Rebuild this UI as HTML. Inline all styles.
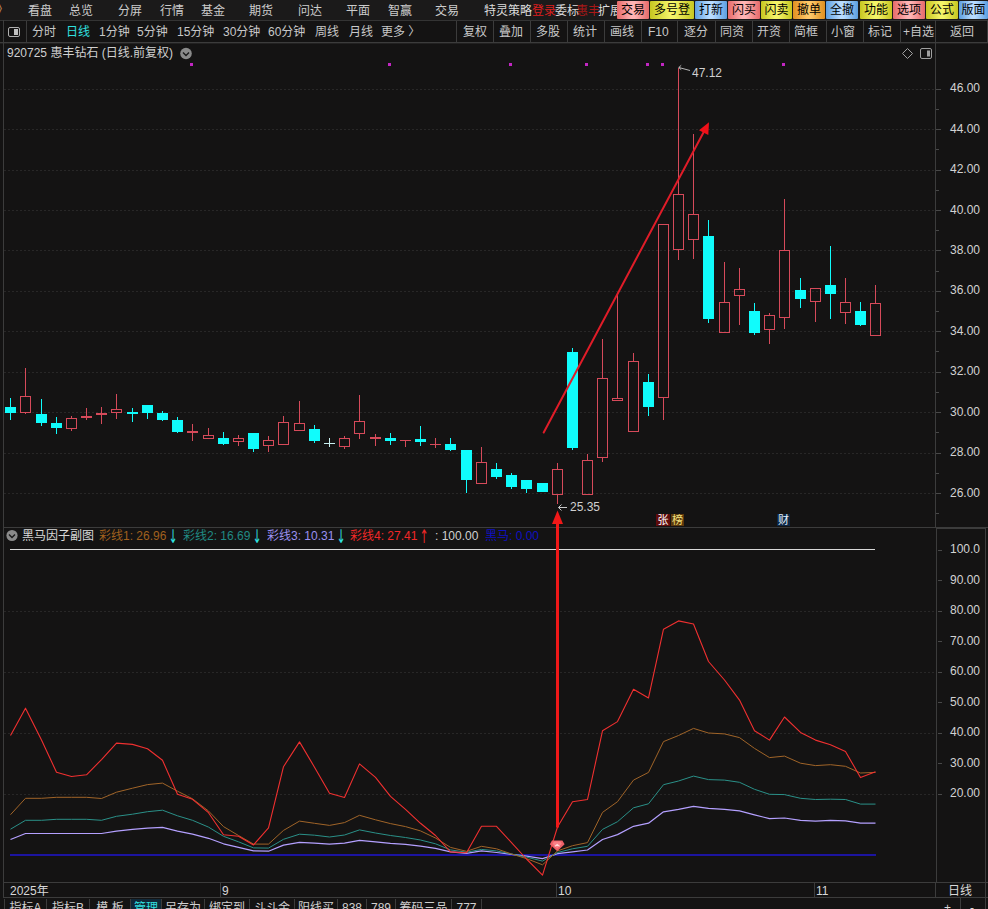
<!DOCTYPE html><html><head><meta charset="utf-8"><title>chart</title><style>
html,body{margin:0;padding:0;background:#141313;}
body{width:988px;height:909px;position:relative;overflow:hidden;font-family:"Liberation Sans","Noto Sans CJK SC",sans-serif;font-size:12px;color:#c8c8c8;}
.t{position:absolute;white-space:nowrap;line-height:14px;height:14px;}
.m{color:#cccccc;top:4px}
.tb{color:#c8c8c8;top:25px}
.btn{position:absolute;top:1px;height:18px;line-height:18px;text-align:center;color:#000;font-size:12px;border-radius:1px}
.bR{background:linear-gradient(90deg,#e66a6a 0,#ffb4b4 45%,#ffb4b4 55%,#e66a6a 100%)}
.bY{background:linear-gradient(90deg,#c6c620 0,#f4f468 45%,#f4f468 55%,#c6c620 100%)}
.bB{background:linear-gradient(90deg,#5c9ee0 0,#b8dcff 45%,#b8dcff 55%,#5c9ee0 100%)}
.bO{background:linear-gradient(90deg,#e09020 0,#ffc868 45%,#ffc868 55%,#e09020 100%)}
.ax{position:absolute;left:950px;width:32px;text-align:left;color:#d2d2d2;font-size:12px;line-height:14px;height:14px}
.tab{position:absolute;top:899px;height:12px;border-left:1px solid #3c3c3c;color:#d0d0d0;line-height:19px;text-align:center;font-size:12px;overflow:hidden}
.ar{position:absolute;top:527px;width:12px;height:20px;line-height:20px;text-align:center;font-family:'DejaVu Sans',sans-serif;font-size:13px;transform:scale(0.8,1.45);}
.tag{position:absolute;top:514px;height:12px;width:13px;line-height:12px;font-size:11px;text-align:center}

</style></head><body>
<svg width="988" height="909" viewBox="0 0 988 909" style="position:absolute;left:0;top:0">
<g stroke="#282727" stroke-width="1" stroke-dasharray="2 2" shape-rendering="crispEdges">
<line x1="4" y1="89.5" x2="935" y2="89.5"/>
<line x1="4" y1="129.5" x2="935" y2="129.5"/>
<line x1="4" y1="170.5" x2="935" y2="170.5"/>
<line x1="4" y1="210.5" x2="935" y2="210.5"/>
<line x1="4" y1="250.5" x2="935" y2="250.5"/>
<line x1="4" y1="291.5" x2="935" y2="291.5"/>
<line x1="4" y1="331.5" x2="935" y2="331.5"/>
<line x1="4" y1="372.5" x2="935" y2="372.5"/>
<line x1="4" y1="412.5" x2="935" y2="412.5"/>
<line x1="4" y1="453.5" x2="935" y2="453.5"/>
<line x1="4" y1="493.5" x2="935" y2="493.5"/>
<line x1="4" y1="611.5" x2="935" y2="611.5"/>
<line x1="4" y1="672.5" x2="935" y2="672.5"/>
<line x1="4" y1="733.5" x2="935" y2="733.5"/>
<line x1="4" y1="794.5" x2="935" y2="794.5"/>
</g>
<g stroke="#3c3c3c" stroke-width="1" shape-rendering="crispEdges" fill="none">
<line x1="0" y1="20.5" x2="988" y2="20.5" stroke="#343434"/>
<line x1="0" y1="42.5" x2="988" y2="42.5"/>
<line x1="0" y1="43.5" x2="988" y2="43.5" stroke="#222121"/>
<line x1="987.5" y1="20" x2="987.5" y2="43"/>
<line x1="3.5" y1="20" x2="3.5" y2="898"/>
<line x1="935.5" y1="20" x2="935.5" y2="528"/><line x1="935.5" y1="882" x2="935.5" y2="898"/>
<line x1="3" y1="527.5" x2="988" y2="527.5"/>
<line x1="3" y1="882.5" x2="988" y2="882.5"/>
<line x1="3" y1="897.5" x2="988" y2="897.5"/>
<rect x="936.5" y="528.5" width="49" height="354"/>
<line x1="985.5" y1="882" x2="985.5" y2="909"/>
<line x1="960.5" y1="898" x2="960.5" y2="909"/>
<line x1="220.5" y1="883" x2="220.5" y2="897"/>
<line x1="556.5" y1="883" x2="556.5" y2="897"/>
<line x1="814.5" y1="883" x2="814.5" y2="897"/>
<line x1="26.5" y1="21" x2="26.5" y2="42"/>
<line x1="456.5" y1="21" x2="456.5" y2="42"/>
<line x1="493.5" y1="21" x2="493.5" y2="42"/>
<line x1="530.5" y1="21" x2="530.5" y2="42"/>
<line x1="567.5" y1="21" x2="567.5" y2="42"/>
<line x1="604.5" y1="21" x2="604.5" y2="42"/>
<line x1="641.5" y1="21" x2="641.5" y2="42"/>
<line x1="677.5" y1="21" x2="677.5" y2="42"/>
<line x1="715.5" y1="21" x2="715.5" y2="42"/>
<line x1="752.5" y1="21" x2="752.5" y2="42"/>
<line x1="789.5" y1="21" x2="789.5" y2="42"/>
<line x1="826.5" y1="21" x2="826.5" y2="42"/>
<line x1="863.5" y1="21" x2="863.5" y2="42"/>
<line x1="900.5" y1="21" x2="900.5" y2="42"/>
</g>
<g stroke="#484848" stroke-width="1" shape-rendering="crispEdges">
<line x1="936" y1="89.5" x2="941" y2="89.5"/>
<line x1="936" y1="109.5" x2="939" y2="109.5"/>
<line x1="936" y1="129.5" x2="941" y2="129.5"/>
<line x1="936" y1="149.5" x2="939" y2="149.5"/>
<line x1="936" y1="170.5" x2="941" y2="170.5"/>
<line x1="936" y1="190.5" x2="939" y2="190.5"/>
<line x1="936" y1="210.5" x2="941" y2="210.5"/>
<line x1="936" y1="230.5" x2="939" y2="230.5"/>
<line x1="936" y1="250.5" x2="941" y2="250.5"/>
<line x1="936" y1="271.5" x2="939" y2="271.5"/>
<line x1="936" y1="291.5" x2="941" y2="291.5"/>
<line x1="936" y1="311.5" x2="939" y2="311.5"/>
<line x1="936" y1="331.5" x2="941" y2="331.5"/>
<line x1="936" y1="351.5" x2="939" y2="351.5"/>
<line x1="936" y1="372.5" x2="941" y2="372.5"/>
<line x1="936" y1="392.5" x2="939" y2="392.5"/>
<line x1="936" y1="412.5" x2="941" y2="412.5"/>
<line x1="936" y1="432.5" x2="939" y2="432.5"/>
<line x1="936" y1="453.5" x2="941" y2="453.5"/>
<line x1="936" y1="473.5" x2="939" y2="473.5"/>
<line x1="936" y1="493.5" x2="941" y2="493.5"/>
<line x1="936" y1="513.5" x2="939" y2="513.5"/>
<line x1="938" y1="794.5" x2="942" y2="794.5"/>
<line x1="938" y1="763.5" x2="942" y2="763.5"/>
<line x1="938" y1="733.5" x2="942" y2="733.5"/>
<line x1="938" y1="702.5" x2="942" y2="702.5"/>
<line x1="938" y1="672.5" x2="942" y2="672.5"/>
<line x1="938" y1="641.5" x2="942" y2="641.5"/>
<line x1="938" y1="611.5" x2="942" y2="611.5"/>
<line x1="938" y1="580.5" x2="942" y2="580.5"/>
<line x1="938" y1="550.5" x2="942" y2="550.5"/>
</g>
<g shape-rendering="crispEdges" stroke-width="1">
<line x1="10.5" y1="398" x2="10.5" y2="420" stroke="#10fcfc"/>
<rect x="5.0" y="407" width="11" height="6" fill="#10fcfc" stroke="none"/>
<line x1="25.5" y1="368" x2="25.5" y2="396" stroke="#d64a5a"/>
<line x1="25.5" y1="413" x2="25.5" y2="414" stroke="#d64a5a"/>
<rect x="20.5" y="396.5" width="10" height="16" fill="none" stroke="#d64a5a"/>
<line x1="41.5" y1="399" x2="41.5" y2="426" stroke="#10fcfc"/>
<rect x="36.0" y="414" width="11" height="9" fill="#10fcfc" stroke="none"/>
<line x1="56.5" y1="417" x2="56.5" y2="434" stroke="#10fcfc"/>
<rect x="51.0" y="423" width="11" height="5" fill="#10fcfc" stroke="none"/>
<line x1="71.5" y1="416" x2="71.5" y2="418" stroke="#d64a5a"/>
<line x1="71.5" y1="429" x2="71.5" y2="431" stroke="#d64a5a"/>
<rect x="66.5" y="418.5" width="10" height="10" fill="none" stroke="#d64a5a"/>
<rect x="81.0" y="416" width="11" height="2" fill="#d64a5a" stroke="none"/>
<line x1="86.5" y1="408" x2="86.5" y2="420" stroke="#d64a5a"/>
<rect x="96.0" y="413" width="11" height="2" fill="#d64a5a" stroke="none"/>
<line x1="101.5" y1="407" x2="101.5" y2="424" stroke="#d64a5a"/>
<line x1="116.5" y1="394" x2="116.5" y2="409" stroke="#d64a5a"/>
<line x1="116.5" y1="413" x2="116.5" y2="419" stroke="#d64a5a"/>
<rect x="111.5" y="409.5" width="10" height="3" fill="none" stroke="#d64a5a"/>
<line x1="132.5" y1="408" x2="132.5" y2="422" stroke="#10fcfc"/>
<rect x="127.0" y="412" width="11" height="2" fill="#10fcfc" stroke="none"/>
<line x1="147.5" y1="405" x2="147.5" y2="419" stroke="#10fcfc"/>
<rect x="142.0" y="405" width="11" height="8" fill="#10fcfc" stroke="none"/>
<line x1="162.5" y1="411" x2="162.5" y2="421" stroke="#10fcfc"/>
<rect x="157.0" y="413" width="11" height="7" fill="#10fcfc" stroke="none"/>
<line x1="177.5" y1="417" x2="177.5" y2="433" stroke="#10fcfc"/>
<rect x="172.0" y="420" width="11" height="12" fill="#10fcfc" stroke="none"/>
<rect x="187.0" y="431" width="11" height="2" fill="#d64a5a" stroke="none"/>
<line x1="192.5" y1="424" x2="192.5" y2="441" stroke="#d64a5a"/>
<line x1="208.5" y1="428" x2="208.5" y2="435" stroke="#d64a5a"/>
<rect x="203.5" y="435.5" width="10" height="3" fill="none" stroke="#d64a5a"/>
<line x1="223.5" y1="432" x2="223.5" y2="445" stroke="#10fcfc"/>
<rect x="218.0" y="438" width="11" height="6" fill="#10fcfc" stroke="none"/>
<line x1="238.5" y1="435" x2="238.5" y2="438" stroke="#d64a5a"/>
<line x1="238.5" y1="442" x2="238.5" y2="446" stroke="#d64a5a"/>
<rect x="233.5" y="438.5" width="10" height="3" fill="none" stroke="#d64a5a"/>
<line x1="253.5" y1="433" x2="253.5" y2="452" stroke="#10fcfc"/>
<rect x="248.0" y="433" width="11" height="16" fill="#10fcfc" stroke="none"/>
<line x1="268.5" y1="436" x2="268.5" y2="440" stroke="#d64a5a"/>
<line x1="268.5" y1="446" x2="268.5" y2="452" stroke="#d64a5a"/>
<rect x="263.5" y="440.5" width="10" height="5" fill="none" stroke="#d64a5a"/>
<line x1="283.5" y1="416" x2="283.5" y2="422" stroke="#d64a5a"/>
<rect x="278.5" y="422.5" width="10" height="22" fill="none" stroke="#d64a5a"/>
<line x1="299.5" y1="401" x2="299.5" y2="423" stroke="#d64a5a"/>
<rect x="294.5" y="423.5" width="10" height="7" fill="none" stroke="#d64a5a"/>
<line x1="314.5" y1="425" x2="314.5" y2="443" stroke="#10fcfc"/>
<rect x="309.0" y="429" width="11" height="12" fill="#10fcfc" stroke="none"/>
<line x1="329.5" y1="438" x2="329.5" y2="447" stroke="#c8f0f0"/>
<rect x="324.0" y="443" width="11" height="1" fill="#c8f0f0" stroke="none"/>
<line x1="344.5" y1="436" x2="344.5" y2="438" stroke="#d64a5a"/>
<line x1="344.5" y1="447" x2="344.5" y2="449" stroke="#d64a5a"/>
<rect x="339.5" y="438.5" width="10" height="8" fill="none" stroke="#d64a5a"/>
<line x1="359.5" y1="395" x2="359.5" y2="421" stroke="#d64a5a"/>
<line x1="359.5" y1="434" x2="359.5" y2="439" stroke="#d64a5a"/>
<rect x="354.5" y="421.5" width="10" height="12" fill="none" stroke="#d64a5a"/>
<rect x="370.0" y="437" width="11" height="2" fill="#d64a5a" stroke="none"/>
<line x1="375.5" y1="434" x2="375.5" y2="446" stroke="#d64a5a"/>
<line x1="390.5" y1="433" x2="390.5" y2="445" stroke="#10fcfc"/>
<rect x="385.0" y="438" width="11" height="3" fill="#10fcfc" stroke="none"/>
<rect x="400.0" y="440" width="11" height="1" fill="#d64a5a" stroke="none"/>
<line x1="405.5" y1="440" x2="405.5" y2="447" stroke="#d64a5a"/>
<line x1="420.5" y1="426" x2="420.5" y2="446" stroke="#10fcfc"/>
<rect x="415.0" y="439" width="11" height="3" fill="#10fcfc" stroke="none"/>
<rect x="430.0" y="444" width="11" height="1" fill="#d64a5a" stroke="none"/>
<line x1="435.5" y1="438" x2="435.5" y2="448" stroke="#d64a5a"/>
<line x1="450.5" y1="438" x2="450.5" y2="451" stroke="#10fcfc"/>
<rect x="445.0" y="444" width="11" height="6" fill="#10fcfc" stroke="none"/>
<line x1="466.5" y1="450" x2="466.5" y2="493" stroke="#10fcfc"/>
<rect x="461.0" y="450" width="11" height="30" fill="#10fcfc" stroke="none"/>
<line x1="481.5" y1="447" x2="481.5" y2="462" stroke="#d64a5a"/>
<rect x="476.5" y="462.5" width="10" height="21" fill="none" stroke="#d64a5a"/>
<line x1="496.5" y1="463" x2="496.5" y2="479" stroke="#10fcfc"/>
<rect x="491.0" y="469" width="11" height="8" fill="#10fcfc" stroke="none"/>
<line x1="511.5" y1="473" x2="511.5" y2="489" stroke="#10fcfc"/>
<rect x="506.0" y="475" width="11" height="12" fill="#10fcfc" stroke="none"/>
<line x1="526.5" y1="480" x2="526.5" y2="493" stroke="#10fcfc"/>
<rect x="521.0" y="480" width="11" height="9" fill="#10fcfc" stroke="none"/>
<line x1="542.5" y1="483" x2="542.5" y2="492" stroke="#10fcfc"/>
<rect x="537.0" y="483" width="11" height="9" fill="#10fcfc" stroke="none"/>
<line x1="557.5" y1="463" x2="557.5" y2="469" stroke="#d64a5a"/>
<line x1="557.5" y1="495" x2="557.5" y2="504" stroke="#d64a5a"/>
<rect x="552.5" y="469.5" width="10" height="25" fill="none" stroke="#d64a5a"/>
<line x1="572.5" y1="348" x2="572.5" y2="450" stroke="#10fcfc"/>
<rect x="567.0" y="352" width="11" height="96" fill="#10fcfc" stroke="none"/>
<line x1="587.5" y1="454" x2="587.5" y2="460" stroke="#d64a5a"/>
<rect x="582.5" y="460.5" width="10" height="34" fill="none" stroke="#d64a5a"/>
<line x1="602.5" y1="339" x2="602.5" y2="378" stroke="#d64a5a"/>
<line x1="602.5" y1="458" x2="602.5" y2="462" stroke="#d64a5a"/>
<rect x="597.5" y="378.5" width="10" height="79" fill="none" stroke="#d64a5a"/>
<line x1="617.5" y1="294" x2="617.5" y2="398" stroke="#d64a5a"/>
<rect x="612.5" y="398.5" width="10" height="2" fill="none" stroke="#d64a5a"/>
<line x1="633.5" y1="353" x2="633.5" y2="361" stroke="#d64a5a"/>
<rect x="628.5" y="361.5" width="10" height="70" fill="none" stroke="#d64a5a"/>
<line x1="648.5" y1="374" x2="648.5" y2="416" stroke="#10fcfc"/>
<rect x="643.0" y="382" width="11" height="25" fill="#10fcfc" stroke="none"/>
<line x1="663.5" y1="398" x2="663.5" y2="420" stroke="#d64a5a"/>
<rect x="658.5" y="224.5" width="10" height="173" fill="none" stroke="#d64a5a"/>
<line x1="678.5" y1="68" x2="678.5" y2="194" stroke="#d64a5a"/>
<line x1="678.5" y1="250" x2="678.5" y2="260" stroke="#d64a5a"/>
<rect x="673.5" y="194.5" width="10" height="55" fill="none" stroke="#d64a5a"/>
<line x1="693.5" y1="134" x2="693.5" y2="214" stroke="#d64a5a"/>
<line x1="693.5" y1="240" x2="693.5" y2="259" stroke="#d64a5a"/>
<rect x="688.5" y="214.5" width="10" height="25" fill="none" stroke="#d64a5a"/>
<line x1="708.5" y1="220" x2="708.5" y2="323" stroke="#10fcfc"/>
<rect x="703.0" y="236" width="11" height="83" fill="#10fcfc" stroke="none"/>
<line x1="724.5" y1="262" x2="724.5" y2="302" stroke="#d64a5a"/>
<rect x="719.5" y="302.5" width="10" height="30" fill="none" stroke="#d64a5a"/>
<line x1="739.5" y1="268" x2="739.5" y2="289" stroke="#d64a5a"/>
<line x1="739.5" y1="296" x2="739.5" y2="325" stroke="#d64a5a"/>
<rect x="734.5" y="289.5" width="10" height="6" fill="none" stroke="#d64a5a"/>
<line x1="754.5" y1="303" x2="754.5" y2="335" stroke="#10fcfc"/>
<rect x="749.0" y="311" width="11" height="22" fill="#10fcfc" stroke="none"/>
<line x1="769.5" y1="313" x2="769.5" y2="315" stroke="#d64a5a"/>
<line x1="769.5" y1="330" x2="769.5" y2="344" stroke="#d64a5a"/>
<rect x="764.5" y="315.5" width="10" height="14" fill="none" stroke="#d64a5a"/>
<line x1="784.5" y1="199" x2="784.5" y2="250" stroke="#d64a5a"/>
<line x1="784.5" y1="318" x2="784.5" y2="329" stroke="#d64a5a"/>
<rect x="779.5" y="250.5" width="10" height="67" fill="none" stroke="#d64a5a"/>
<line x1="800.5" y1="278" x2="800.5" y2="308" stroke="#10fcfc"/>
<rect x="795.0" y="290" width="11" height="9" fill="#10fcfc" stroke="none"/>
<line x1="815.5" y1="302" x2="815.5" y2="322" stroke="#d64a5a"/>
<rect x="810.5" y="288.5" width="10" height="13" fill="none" stroke="#d64a5a"/>
<line x1="830.5" y1="246" x2="830.5" y2="319" stroke="#10fcfc"/>
<rect x="825.0" y="285" width="11" height="9" fill="#10fcfc" stroke="none"/>
<line x1="845.5" y1="278" x2="845.5" y2="302" stroke="#d64a5a"/>
<line x1="845.5" y1="313" x2="845.5" y2="324" stroke="#d64a5a"/>
<rect x="840.5" y="302.5" width="10" height="10" fill="none" stroke="#d64a5a"/>
<line x1="860.5" y1="302" x2="860.5" y2="326" stroke="#10fcfc"/>
<rect x="855.0" y="311" width="11" height="14" fill="#10fcfc" stroke="none"/>
<line x1="875.5" y1="285" x2="875.5" y2="303" stroke="#d64a5a"/>
<rect x="870.5" y="303.5" width="10" height="32" fill="none" stroke="#d64a5a"/>
</g>
<g fill="#c326c3">
<rect x="190.0" y="63" width="3" height="3"/>
<rect x="388.0" y="63" width="3" height="3"/>
<rect x="509.0" y="63" width="3" height="3"/>
<rect x="585.0" y="63" width="3" height="3"/>
<rect x="646.0" y="63" width="3" height="3"/>
<rect x="661.0" y="63" width="3" height="3"/>
<rect x="782.0" y="63" width="3" height="3"/>
</g>
<line x1="10" y1="549.5" x2="875" y2="549.5" stroke="#d8d8d8" stroke-width="1.2"/>
<line x1="10" y1="855" x2="876" y2="855" stroke="#1c14a0" stroke-width="2"/>
<polyline points="10.5,839.5 25.5,833.5 41.5,833.5 56.5,833.5 71.5,833.5 86.5,833.5 101.5,833.5 116.5,831.2 132.5,829.4 147.5,828.2 162.5,827.4 177.5,831.2 192.5,834.2 208.5,838.3 223.5,843.8 238.5,847.4 253.5,850.9 268.5,851.2 283.5,845.1 299.5,842.3 314.5,843.1 329.5,844.1 344.5,843.1 359.5,840.3 375.5,841.8 390.5,843.3 405.5,844.4 420.5,846.1 435.5,848.4 450.5,851.9 466.5,853.3 481.5,850.9 496.5,852.5 511.5,854.3 526.5,856.2 542.5,858.6 557.5,853.7 572.5,851.8 587.5,850.0 602.5,839.5 617.5,834.6 633.5,826.3 648.5,823.2 663.5,811.8 678.5,809.4 693.5,806.3 708.5,808.4 724.5,809.4 739.5,810.9 754.5,814.9 769.5,818.6 784.5,818.0 800.5,820.4 815.5,821.1 830.5,820.4 845.5,820.8 860.5,823.2 875.5,823.2" fill="none" stroke="#b4a0ff" stroke-width="1.2" stroke-linejoin="round"/>
<polyline points="10.5,829.2 25.5,820.3 41.5,820.3 56.5,819.3 71.5,819.3 86.5,819.3 101.5,820.3 116.5,816.3 132.5,814.2 147.5,811.7 162.5,810.2 177.5,815.8 192.5,820.3 208.5,827.1 223.5,836.3 238.5,841.8 253.5,847.9 268.5,848.1 283.5,839.3 299.5,834.2 314.5,835.2 329.5,837.0 344.5,835.0 359.5,829.9 375.5,833.0 390.5,835.5 405.5,837.5 420.5,840.0 435.5,843.8 450.5,849.9 466.5,852.2 481.5,849.4 496.5,850.9 511.5,854.0 526.5,857.1 542.5,861.1 557.5,852.5 572.5,848.8 587.5,846.3 602.5,829.4 617.5,821.7 633.5,807.8 648.5,803.8 663.5,784.7 678.5,781.0 693.5,776.1 708.5,779.6 724.5,780.1 739.5,782.3 754.5,789.3 769.5,794.3 784.5,794.6 800.5,798.3 815.5,799.5 830.5,799.2 845.5,799.5 860.5,804.1 875.5,804.1" fill="none" stroke="#2a9088" stroke-width="1.0" stroke-linejoin="round"/>
<polyline points="10.5,814.7 25.5,798.3 41.5,798.3 56.5,797.3 71.5,797.3 86.5,797.3 101.5,798.5 116.5,792.2 132.5,788.2 147.5,784.6 162.5,783.1 177.5,791.2 192.5,798.8 208.5,811.0 223.5,826.6 238.5,835.5 253.5,844.1 268.5,844.1 283.5,830.4 299.5,821.1 314.5,823.3 329.5,825.4 344.5,822.6 359.5,815.3 375.5,819.8 390.5,823.6 405.5,826.6 420.5,830.9 435.5,838.0 450.5,847.4 466.5,851.3 481.5,846.3 496.5,848.8 511.5,854.0 526.5,858.6 542.5,864.8 557.5,850.9 572.5,845.7 587.5,842.6 602.5,812.4 617.5,801.7 633.5,780.1 648.5,772.4 663.5,741.6 678.5,735.5 693.5,728.4 708.5,733.0 724.5,733.9 739.5,737.6 754.5,748.4 769.5,757.6 784.5,756.1 800.5,763.2 815.5,765.6 830.5,764.7 845.5,766.3 860.5,773.0 875.5,772.4" fill="none" stroke="#a06428" stroke-width="1.0" stroke-linejoin="round"/>
<polyline points="10.5,735.5 25.5,708.2 41.5,740.0 56.5,772.2 71.5,776.5 86.5,774.8 101.5,759.6 116.5,743.1 132.5,744.4 147.5,748.7 162.5,760.3 177.5,794.3 192.5,799.3 208.5,812.7 223.5,834.7 238.5,836.3 253.5,844.9 268.5,827.9 283.5,766.7 299.5,741.9 314.5,767.2 329.5,793.2 344.5,797.5 359.5,763.9 375.5,777.3 390.5,796.3 405.5,809.4 420.5,823.3 435.5,835.5 450.5,851.9 466.5,852.8 481.5,826.3 496.5,826.3 511.5,842.6 526.5,859.0 542.5,875.2 557.5,827.0 572.5,801.7 587.5,799.5 602.5,730.8 617.5,721.6 633.5,689.3 648.5,697.9 663.5,629.2 678.5,620.9 693.5,624.0 708.5,661.5 724.5,680.0 739.5,700.1 754.5,730.8 769.5,740.1 784.5,717.0 800.5,732.4 815.5,740.1 830.5,744.7 845.5,751.5 860.5,777.6 875.5,771.8" fill="none" stroke="#f03030" stroke-width="1.1" stroke-linejoin="round"/>
<line x1="543.7" y1="432.5" x2="704" y2="131.5" stroke="#e01c28" stroke-width="2" stroke-linecap="round"/>
<polygon points="709,122.3 708.3,135 699,130.2" fill="#f01018"/>
<line x1="557.5" y1="521" x2="557.5" y2="827.5" stroke="#f01818" stroke-width="3"/>
<polygon points="557.5,510.5 563,524 552,524" fill="#f01818"/>
<g transform="translate(557.2,846)"><polygon points="-7.4,-1.8 -5.2,-5.6 5.2,-5.6 7.4,-1.8 0,5.2" fill="#ee6068"/><polygon points="-4.6,-2.2 -3,-4.4 3,-4.4 4.6,-2.2 0,2.6" fill="#f88088"/><polyline points="-2.4,0.4 0,-1.6 2.4,0.4" fill="none" stroke="#ffd8d8" stroke-width="1.1"/></g>
<g stroke="#c8c8c8" stroke-width="1" fill="none"><path d="M681.2 65.3 L678.8 67.5 L681.2 69.7 M678.8 67.5 L690 70.5" stroke-width="0.9"/><path d="M558.5 507.5 L567 507.5 M561.5 504.5 L558.5 507.5 L561.5 510.5"/></g>
<g stroke="#a0a0a0" stroke-width="1" fill="none"><path d="M907.5 48.5 L912.5 53.5 L907.5 58.5 L902.5 53.5 Z"/><rect x="920.5" y="48.5" width="11" height="10" rx="1.5"/></g><rect x="927" y="50.5" width="3" height="6" fill="#a0a0a0"/>
<g stroke="#b0b0b0" stroke-width="1" fill="none"><rect x="8.5" y="27.5" width="11" height="9" rx="1.5"/></g><rect x="14" y="29" width="4" height="6" fill="#c0c0c0"/>
<circle cx="186" cy="53.5" r="5.8" fill="#8a8a8a"/><polyline points="183,52.5 186,55.5 189,52.5" fill="none" stroke="#1a1a1a" stroke-width="1.4"/>
<circle cx="12" cy="535.5" r="5.6" fill="#8a8a8a"/><polyline points="9,534.5 12,537.5 15,534.5" fill="none" stroke="#1a1a1a" stroke-width="1.4"/>
</svg>
<div style="position:absolute;left:0;top:0;width:988px;height:20px;background:#1b1a1a"></div>
<div class="t" style="left:-4px;top:3px;color:#e0a060">》</div>
<div class="t m" style="left:28px">看盘</div>
<div class="t m" style="left:69px">总览</div>
<div class="t m" style="left:118px">分屏</div>
<div class="t m" style="left:160px">行情</div>
<div class="t m" style="left:201px">基金</div>
<div class="t m" style="left:249px">期货</div>
<div class="t m" style="left:298px">问达</div>
<div class="t m" style="left:346px">平面</div>
<div class="t m" style="left:388px">智赢</div>
<div class="t m" style="left:435px">交易</div>
<div class="t m" style="left:484px;color:#dcdcdc">特</div>
<div class="t m" style="left:496px;color:#dcdcdc">灵策略</div>
<div class="t" style="left:532px;top:4px;color:#dc1e1e">登录</div>
<div class="t" style="left:576px;top:4px;color:#a81818">惠丰</div>
<div class="t m" style="left:555px;color:#dcdcdc">委标</div>
<div class="t m" style="left:598px;color:#dcdcdc">扩展</div>
<div class="btn bR" style="left:617px;width:32px">交易</div>
<div class="btn bY" style="left:650px;width:44px">多号登</div>
<div class="btn bB" style="left:695px;width:32px">打新</div>
<div class="btn bR" style="left:728px;width:32px">闪买</div>
<div class="btn bY" style="left:761px;width:31px">闪卖</div>
<div class="btn bO" style="left:793px;width:32px">撤单</div>
<div class="btn bB" style="left:826px;width:32px">全撤</div>
<div class="btn bY" style="left:860px;width:32px">功能</div>
<div class="btn bR" style="left:893px;width:32px">选项</div>
<div class="btn bY" style="left:926px;width:32px">公式</div>
<div class="btn bB" style="left:959px;width:29px">版面</div>
<div class="t tb" style="left:32px">分时</div>
<div class="t tb" style="left:66px;color:#30e0e0">日线</div>
<div class="t tb" style="left:99px">1分钟</div>
<div class="t tb" style="left:137px">5分钟</div>
<div class="t tb" style="left:177px">15分钟</div>
<div class="t tb" style="left:223px">30分钟</div>
<div class="t tb" style="left:268px">60分钟</div>
<div class="t tb" style="left:315px">周线</div>
<div class="t tb" style="left:349px">月线</div>
<div class="t tb" style="left:381px">更多 〉</div>
<div class="t tb" style="left:463px">复权</div>
<div class="t tb" style="left:499px">叠加</div>
<div class="t tb" style="left:536px">多股</div>
<div class="t tb" style="left:573px">统计</div>
<div class="t tb" style="left:610px">画线</div>
<div class="t tb" style="left:648px">F10</div>
<div class="t tb" style="left:684px">逐分</div>
<div class="t tb" style="left:720px">同资</div>
<div class="t tb" style="left:757px">开资</div>
<div class="t tb" style="left:794px">简框</div>
<div class="t tb" style="left:831px">小窗</div>
<div class="t tb" style="left:868px">标记</div>
<div class="t tb" style="left:903px">+自选</div>
<div class="t tb" style="left:950px">返回</div>
<div class="t" style="left:7px;top:46px;color:#d0d0d0">920725 惠丰钻石 (日线.前复权)</div>
<div class="t" style="left:692px;top:66px;color:#d0d0d0">47.12</div>
<div class="t" style="left:570px;top:500px;color:#d0d0d0">25.35</div>
<div class="tag" style="left:656px;width:14px;background:#5e0c0c;color:#fff">张</div>
<div class="tag" style="left:671px;background:#5c380c;color:#f0e080">榜</div>
<div class="tag" style="left:777px;background:#0c2644;color:#e8f4ff">财</div>
<div class="t" style="left:22px;top:529px;color:#d8d8d8">黑马因子副图</div>
<div class="t" style="left:99px;top:529px;color:#a0601e">彩线1: 26.96</div>
<div class="t" style="left:183px;top:529px;color:#208a84">彩线2: 16.69</div>
<div class="t" style="left:267px;top:529px;color:#9a90f0">彩线3: 10.31</div>
<div class="t" style="left:350px;top:529px;color:#f02828">彩线4: 27.41</div>
<div class="t" style="left:435px;top:529px;color:#d0d0d0">: 100.00</div>
<div class="ar" style="left:166.5px;color:#30e0e0">↓</div>
<div class="ar" style="left:251px;color:#30e0e0">↓</div>
<div class="ar" style="left:335px;color:#30e0e0">↓</div>
<div class="ar" style="left:418px;color:#f02828">↑</div>
<div class="t" style="left:485px;top:529px;color:#1010c0">黑马: 0.00</div>
<div class="ax" style="top:81.2px">46.00</div>
<div class="ax" style="top:121.6px">44.00</div>
<div class="ax" style="top:162.1px">42.00</div>
<div class="ax" style="top:202.5px">40.00</div>
<div class="ax" style="top:242.9px">38.00</div>
<div class="ax" style="top:283.4px">36.00</div>
<div class="ax" style="top:323.8px">34.00</div>
<div class="ax" style="top:364.2px">32.00</div>
<div class="ax" style="top:404.6px">30.00</div>
<div class="ax" style="top:445.1px">28.00</div>
<div class="ax" style="top:485.5px">26.00</div>
<div class="ax" style="top:786.4px">20.00</div>
<div class="ax" style="top:755.9px">30.00</div>
<div class="ax" style="top:725.3px">40.00</div>
<div class="ax" style="top:694.8px">50.00</div>
<div class="ax" style="top:664.2px">60.00</div>
<div class="ax" style="top:633.6px">70.00</div>
<div class="ax" style="top:603.1px">80.00</div>
<div class="ax" style="top:572.5px">90.00</div>
<div class="ax" style="top:542.0px">100.0</div>
<div class="t" style="left:10px;top:884px;color:#d8d8d8">2025年</div>
<div class="t" style="left:222px;top:884px;color:#d8d8d8">9</div>
<div class="t" style="left:558px;top:884px;color:#d8d8d8">10</div>
<div class="t" style="left:816px;top:884px;color:#d8d8d8">11</div>
<div class="t" style="left:948px;top:884px;color:#d8d8d8">日线</div>
<div class="t" style="left:944px;top:901px;color:#d8d8d8">+</div>
<div class="t" style="left:970px;top:901px;color:#d8d8d8">-</div>
<div class="tab" style="left:4px;width:41px">指标A</div>
<div class="tab" style="left:46px;width:42px">指标B</div>
<div class="tab" style="left:89px;width:40px">模 板</div>
<div class="tab" style="left:130px;width:30px;color:#30e0e0;background:#102838">管理</div>
<div class="tab" style="left:161px;width:42px">另存为</div>
<div class="tab" style="left:204px;width:44px">绑定到</div>
<div class="tab" style="left:249px;width:44px">斗斗金</div>
<div class="tab" style="left:294px;width:42px">阳线买</div>
<div class="tab" style="left:337px;width:28px">838</div>
<div class="tab" style="left:366px;width:28px">789</div>
<div class="tab" style="left:395px;width:55px">筹码三品</div>
<div class="tab" style="left:451px;width:29px">777</div>
<div class="tab" style="left:481px;width:1px"></div>
</body></html>
